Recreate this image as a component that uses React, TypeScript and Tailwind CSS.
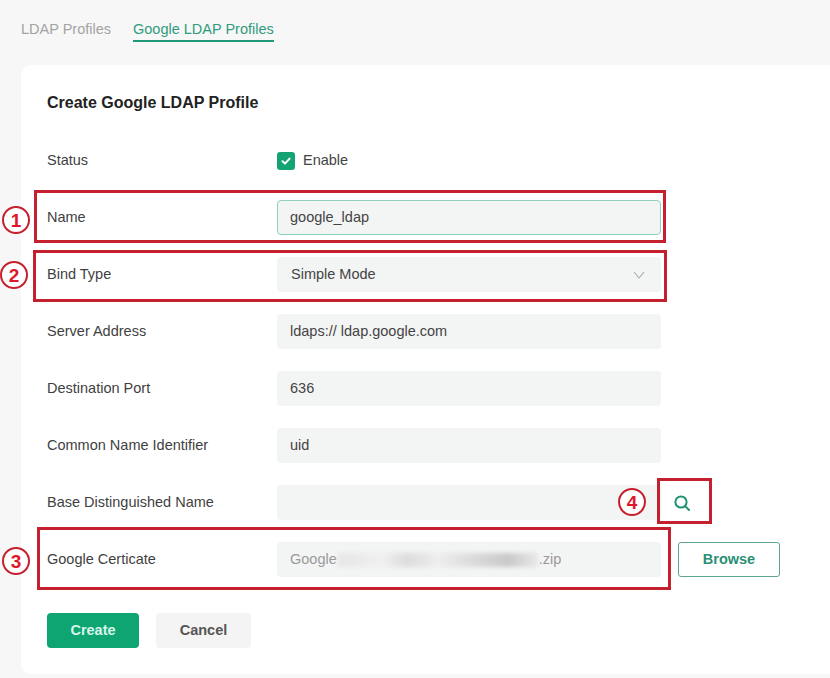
import React from "react";

const font = { fontFamily: '"Liberation Sans", Arial, sans-serif' };

function Row({ label, children }: { label: string; children: React.ReactNode }) {
  return (
    <div className="flex h-[57px] items-center">
      <div className="w-[230px] shrink-0 text-[14.5px] text-[#3f3f3f]">{label}</div>
      {children}
    </div>
  );
}

function Field({ value, muted }: { value?: React.ReactNode; muted?: boolean }) {
  return (
    <div className={`flex h-[35px] w-[384px] items-center rounded-[4px] bg-[#f3f4f4] pl-[13px] text-[14.5px] ${muted ? "text-[#9a9a9a]" : "text-[#444444]"}`}>
      {value}
    </div>
  );
}

function Box({ className }: { className: string }) {
  return <div className={`absolute border-[3px] border-[#c5202f] ${className}`} />;
}

function Num({ n, className }: { n: string; className: string }) {
  return (
    <div className={`absolute flex h-[28px] w-[28px] items-center justify-center rounded-full border-[2.5px] border-[#c5202f] bg-white text-[19px] font-bold leading-none text-[#e0162b] ${className}`}>
      {n}
    </div>
  );
}

export default function App() {
  return (
    <div className="relative h-[678px] w-[830px] overflow-hidden bg-[#f7f7f7]" style={font}>
      <div className="flex h-[65px] items-start gap-[22px] pl-[21px] pt-[19px] text-[14.5px]">
        <div className="leading-[21px] text-[#a3a3a3]">LDAP Profiles</div>
        <div className="h-[23px] border-b-2 border-[#1f9a78] leading-[21px] text-[#2f9c7d]">Google LDAP Profiles</div>
      </div>

      <div className="ml-[21px] h-[609px] rounded-l-[10px] bg-white pl-[26px] pt-[26px]">
        <h1 className="mb-[17px] text-[16px] font-bold leading-[24px] text-[#222222]">Create Google LDAP Profile</h1>

        <Row label="Status">
          <div className="flex items-center gap-[8px] text-[14.5px] text-[#444444]">
            <span className="flex h-[18px] w-[18px] items-center justify-center rounded-[3px] bg-[#14a474]">
              <svg width="12" height="12" viewBox="0 0 12 12" fill="none" stroke="white" strokeWidth="2" strokeLinecap="round" strokeLinejoin="round">
                <path d="M2.5 6.2 5 8.6 9.6 3.6" />
              </svg>
            </span>
            Enable
          </div>
        </Row>

        <Row label="Name">
          <div className="flex h-[35px] w-[384px] items-center rounded-[4px] border border-[#8fd0bd] bg-[#f3f4f4] pl-[12px] text-[14.5px] text-[#444444]">
            google_ldap
          </div>
        </Row>

        <Row label="Bind Type">
          <div className="flex h-[35px] w-[384px] items-center justify-between rounded-[4px] bg-[#f3f4f4] pl-[14px] pr-[16px] text-[14.5px] text-[#444444]">
            Simple Mode
            <svg width="12" height="8" viewBox="0 0 12 8" fill="none" stroke="#a8a8a8" strokeWidth="1.1">
              <path d="M1 1l5 6 5-6" />
            </svg>
          </div>
        </Row>

        <Row label="Server Address"><Field value="ldaps:// ldap.google.com" /></Row>
        <Row label="Destination Port"><Field value="636" /></Row>
        <Row label="Common Name Identifier"><Field value="uid" /></Row>

        <Row label="Base Distinguished Name">
          <Field />
          <div className="ml-[12px] flex w-[18px] items-center justify-center">
            <svg width="18" height="18" viewBox="0 0 18 18" fill="none" stroke="#1f9273" strokeWidth="2" strokeLinecap="round">
              <circle cx="8" cy="8" r="5.6" />
              <path d="M12.4 12.4 16 16" />
            </svg>
          </div>
        </Row>

        <Row label="Google Certicate">
          <Field
            muted
            value={
              <span className="flex items-center">
                Google
                <span className="mx-[1px] h-[14px] w-[200px] bg-[linear-gradient(90deg,#e6e6e6,#f0f0f0_22%,#dcdcdc_35%,#eeeeee_50%,#d6d6d6_72%,#c9c9c9_85%,#e8e8e8)] blur-[2px]" />
                .zip
              </span>
            }
          />
          <button className="ml-[17px] h-[35px] w-[102px] rounded-[3px] border border-[#5fa594] bg-white text-[14.5px] font-bold text-[#2b8f74]">
            Browse
          </button>
        </Row>

        <div className="mt-[25px] flex gap-[17px]">
          <button className="h-[35px] w-[92px] rounded-[4px] bg-[#0ea573] text-[14.5px] font-bold text-[#d8f5ea]">Create</button>
          <button className="h-[35px] w-[95px] rounded-[4px] bg-[#f4f4f4] text-[14.5px] font-bold text-[#555555]">Cancel</button>
        </div>
      </div>

      <Box className="left-[34px] top-[190px] h-[53px] w-[632px]" />
      <Box className="left-[33px] top-[250px] h-[52px] w-[634px]" />
      <Box className="left-[37px] top-[527px] h-[63px] w-[634px]" />
      <Box className="left-[657px] top-[478px] h-[46px] w-[55px]" />
      <Num n="1" className="left-[2px] top-[206px]" />
      <Num n="2" className="left-[0px] top-[261px]" />
      <Num n="3" className="left-[2px] top-[547px]" />
      <Num n="4" className="left-[618px] top-[488px]" />
    </div>
  );
}
